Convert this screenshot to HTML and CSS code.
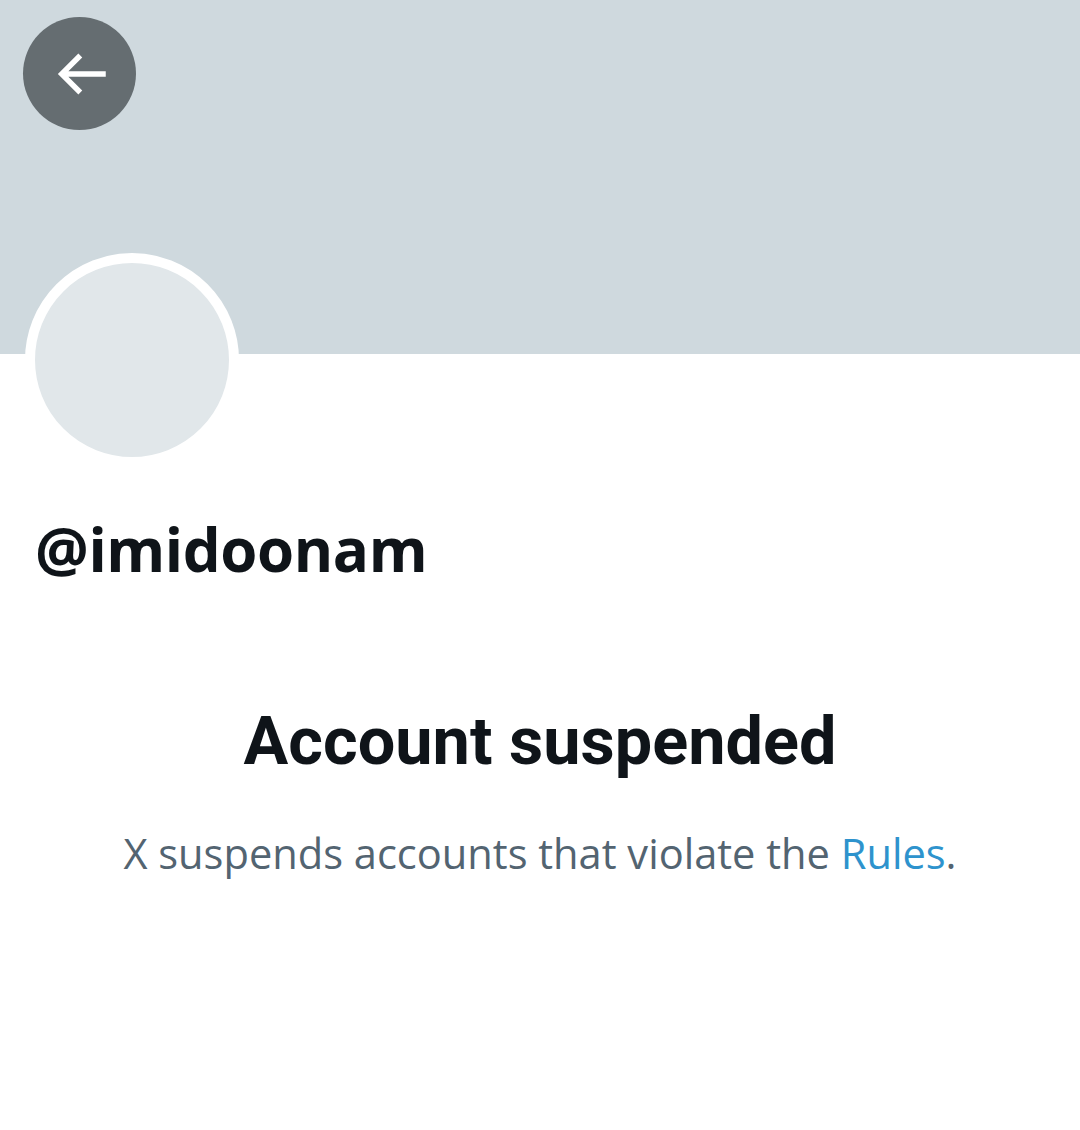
FILE: index.html
```html
<!DOCTYPE html>
<html lang="en">
<head>
<meta charset="utf-8">
<link rel="stylesheet" href="styles.css">
</head>
<body>
<div class="page">
  <header class="banner">
    <button class="back" aria-label="Back">
      <svg viewBox="0 0 24 24" width="66" height="66"><path d="M7.414 13l5.043 5.04-1.414 1.42L3.586 12l7.457-7.46 1.414 1.42L7.414 11H21v2H7.414z" fill="#fff"/></svg>
    </button>
  </header>
  <section class="profile">
    <div class="avatar"></div>
    <h1 class="handle">@imidoonam</h1>
  </section>
  <section class="notice">
    <h2 class="title">Account suspended</h2>
    <p class="desc">X suspends accounts that violate the <a class="link" href="#">Rules</a>.</p>
  </section>
</div>
</body>
</html>
```
FILE: styles.css
```css
html, body {
  margin: 0;
  padding: 0;
  background: #fff;
}
body {
  font-family: "Open Sans", "Noto Sans", sans-serif;
  color: #0f1419;
}
.page {
  width: 1080px;
  height: 1130px;
  overflow: hidden;
}
.banner {
  height: 354px;
  background: #cfd9de;
  padding: 17px 0 0 23px;
  box-sizing: border-box;
}
.back {
  width: 113px;
  height: 113px;
  border-radius: 50%;
  border: 0;
  padding: 0 0 0 2px;
  background: #656d71;
  display: flex;
  align-items: center;
  justify-content: center;
}
.profile {
  padding: 0 0 0 25px;
}
.avatar {
  width: 194px;
  height: 194px;
  border-radius: 50%;
  background: #e1e7ea;
  border: 10px solid #fff;
  margin-top: -101px;
}
.handle {
  margin: 42px 0 0 10px;
  font-size: 60px;
  font-weight: 700;
  line-height: 80px;
  letter-spacing: -0.4px;
}
.notice {
  text-align: center;
  margin-top: 112px;
}
.title {
  margin: 0;
  font-family: Roboto, "Open Sans", sans-serif;
  font-size: 66.6px;
  font-weight: 700;
  line-height: 80px;
}
.desc {
  margin: 44px 0 0;
  font-size: 41.6px;
  line-height: 56px;
  color: #536471;
}
.link {
  color: #2e93cd;
  text-decoration: none;
}
```
